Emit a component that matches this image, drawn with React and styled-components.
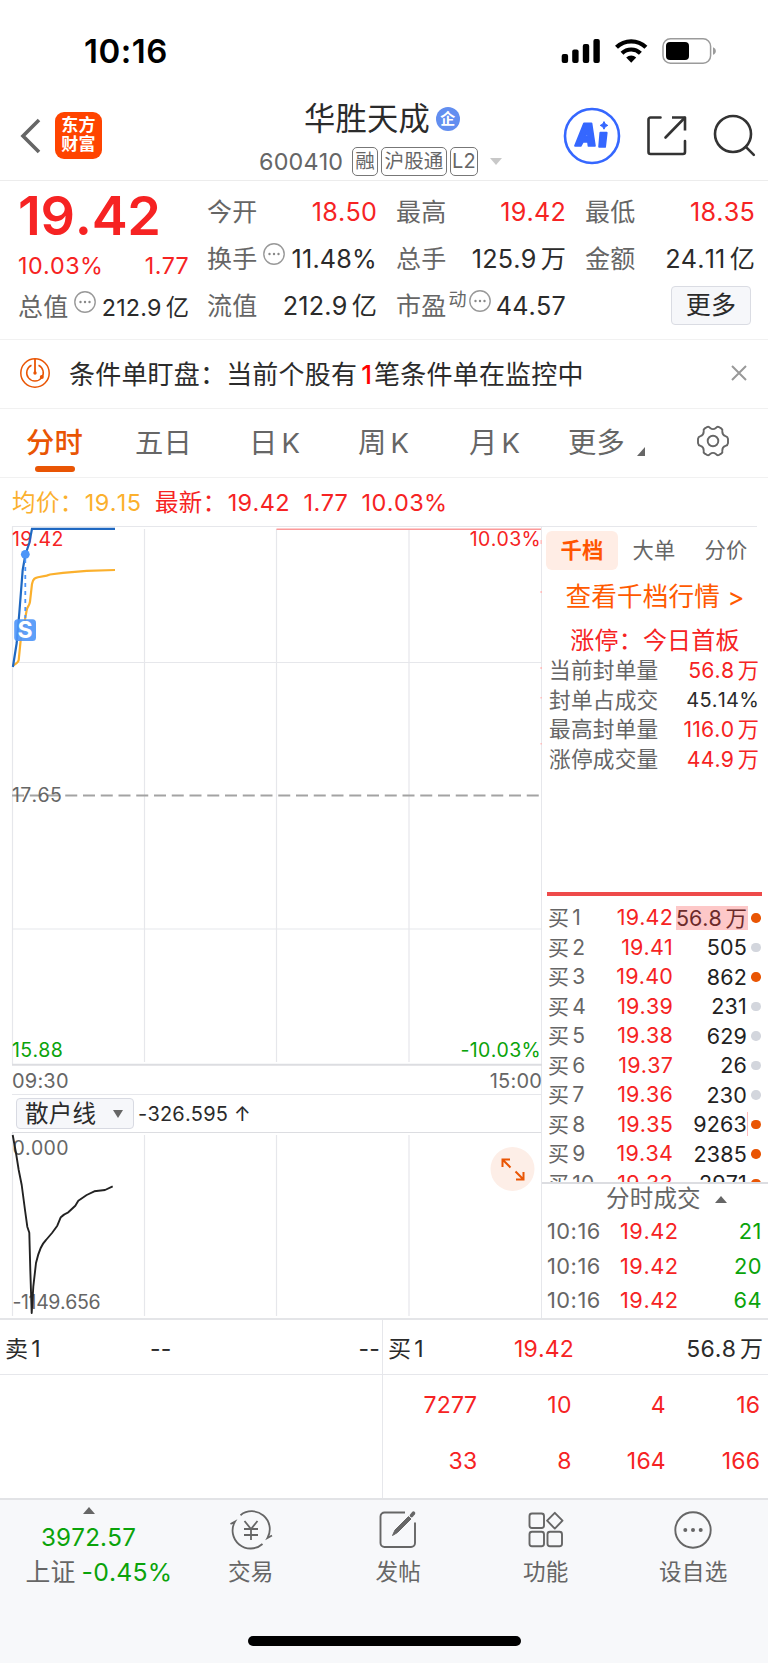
import React from 'react'

import styled, { createGlobalStyle } from 'styled-components';

const RED = '#f62323'
const GREEN = '#0aa30a'
const ORANGE = '#e95504'
const GRAY = '#666'
const DARK = '#2b2b2b'
const LINE = '#e6e7eb'

const quotes = [
  [
    { label: '今开', value: '18.50', color: RED },
    { label: '最高', value: '19.42', color: RED },
    { label: '最低', value: '18.35', color: RED },
  ],
  [
    { label: '换手', value: '11.48%', tip: true },
    { label: '总手', value: '125.9', unit: '万' },
    { label: '金额', value: '24.11', unit: '亿' },
  ],
]

const tabs = [
  { name: '分时', active: true },
  { name: '五日' },
  { name: '日', k: true },
  { name: '周', k: true },
  { name: '月', k: true },
  { name: '更多', more: true },
]

const limits = [
  { label: '当前封单量', value: '56.8', unit: '万', color: RED },
  { label: '封单占成交', value: '45.14%', color: DARK, small: true },
  { label: '最高封单量', value: '116.0', unit: '万', color: RED },
  { label: '涨停成交量', value: '44.9', unit: '万', color: RED },
]

const bids = [
  { price: '19.42', vol: '56.8', unit: '万', hot: true, full: true },
  { price: '19.41', vol: '505' },
  { price: '19.40', vol: '862', hot: true },
  { price: '19.39', vol: '231' },
  { price: '19.38', vol: '629' },
  { price: '19.37', vol: '26' },
  { price: '19.36', vol: '230' },
  { price: '19.35', vol: '9263', hot: true, edge: true },
  { price: '19.34', vol: '2385', hot: true },
  { price: '19.33', vol: '2971', hot: true },
]

const trades = ['21', '20', '64']

const queue = [
  ['7277', '10', '4', '16'],
  ['33', '8', '164', '166'],
]

const Tip = () => (
  <TipIcon width="22" height="22" viewBox="0 0 22 22">
    <circle cx="11" cy="11" r="10.2" fill="none" stroke="#999" strokeWidth="1.4" />
    <circle cx="6.5" cy="11" r="1.2" fill="#888" />
    <circle cx="11" cy="11" r="1.2" fill="#888" />
    <circle cx="15.5" cy="11" r="1.2" fill="#888" />
  </TipIcon>
)

const StatusIcons = () => (
  <svg width="158" height="28" viewBox="560 37 158 28">
    <rect x="561.7" y="54" width="6.4" height="9" rx="2" />
    <rect x="572.2" y="49.5" width="6.4" height="13.5" rx="2" />
    <rect x="582.8" y="44" width="6.4" height="19" rx="2" />
    <rect x="593.4" y="39" width="6.4" height="24" rx="2" />
    <g fill="none" stroke="#000" strokeWidth="4.2">
      <path d="M616.5 47.3a21 21 0 0 1 29.4 0" />
      <path d="M622 53.2a13.3 13.3 0 0 1 18.4 0" />
    </g>
    <path d="M626.2 57.6a7.2 7.2 0 0 1 10 0l-5 5.2z" />
    <rect x="663" y="38.8" width="47.6" height="24.4" rx="7.5" fill="none" stroke="#9b9b9b" strokeWidth="1.5" />
    <rect x="666" y="42" width="23" height="18" rx="4" />
    <path d="M713 47.2c3.8 1.4 3.8 6.2 0 7.6z" fill="#9b9b9b" />
  </svg>
)

const AiIcon = () => (
  <svg width="58" height="58" viewBox="0 0 58 58">
    <circle cx="29" cy="29" r="27" fill="#fff" stroke="#3567ff" strokeWidth="2.6" />
    <g fill="#3567ff" stroke="#3567ff" strokeWidth="2" strokeLinejoin="round">
      <path fillRule="evenodd" d="M21 16.5h7.400l3.400 22.300h-6.200l-.5-4h-5.200l-2.200 4h-5.600zM24.600 24l-2.500 5.700h3.100z" />
      <path d="M37.4 25.800h6.200l-1.600 14h-5.800z" />
    </g>
    <path d="M41 14.6l1.300 2.500 2.500 1.300-2.500 1.300-1.300 2.500-1.300-2.500-2.500-1.300 2.500-1.300z" fill="#3567ff" stroke="#3567ff" />
  </svg>
)

const ShareIcon = () => (
  <svg width="42" height="42" viewBox="0 0 42 42" fill="none" stroke="#333" strokeWidth="2.6" strokeLinecap="round" strokeLinejoin="round">
    <path d="M14.5 2.5H4.5a2 2 0 0 0-2 2V37a2 2 0 0 0 2 2H37a2 2 0 0 0 2-2V26" />
    <path d="M26 2.5h13v13" strokeLinecap="butt" />
    <path d="M38.5 3L19.5 22.5" />
  </svg>
)

const SearchIcon = () => (
  <svg width="44" height="44" viewBox="0 0 44 44" fill="none" stroke="#333" strokeWidth="2.6" strokeLinecap="round">
    <circle cx="20" cy="20" r="18" />
    <path d="M32.8 32.8l8 8" />
  </svg>
)

const GearIcon = () => (
  <svg width="34" height="34" viewBox="0 0 34 34" fill="none" stroke={GRAY} strokeWidth="1.9" strokeLinejoin="round">
    <path d="M10.8 3.2q2-1 3.3.8q2.9 2.2 5.8 0q1.3-1.8 3.3-.8l2 1.2q1.7 1.2 1.1 3.2q0 3.5 3.2 4.6q2.3.6 2.5 2.7v4.2q-.2 2.1-2.5 2.7q-3.2 1.1-3.2 4.6q.6 2-1.1 3.2l-2 1.2q-2 1-3.3-.8q-2.9-2.2-5.8 0q-1.3 1.8-3.3.8l-2-1.2q-1.7-1.2-1.1-3.2q0-3.5-3.2-4.6q-2.3-.6-2.5-2.7v-4.2q.2-2.1 2.5-2.7q3.2-1.1 3.2-4.6q-.6-2 1.1-3.2z" />
    <circle cx="17" cy="17" r="5.3" />
  </svg>
)

const RadarIcon = () => (
  <svg width="32" height="32" viewBox="0 0 32 32" fill="none" stroke={ORANGE} strokeWidth="1.5">
    <circle cx="16" cy="16" r="14.2" />
    <path d="M12.5 8.2a8.3 8.3 0 1 0 7 0" />
    <path d="M16 2v14" strokeWidth="1.8" />
    <circle cx="16" cy="16" r="1.7" fill={ORANGE} stroke="none" />
    <circle cx="22.8" cy="20" r="2" fill={ORANGE} stroke="none" />
  </svg>
)

const PriceChart = () => (
  <ChartSvg width="542" height="540" viewBox="0 526 542 540">
    <g stroke={LINE} strokeWidth="1.2" fill="none">
      <path d="M12.5 1064V526.5H542" />
      <path d="M144.5 529V1062M276.5 529V1062M409 529V1062" />
      <path d="M12.5 662.5H541M12.5 929H541" />
    </g>
    <path d="M12 1064.8H542" stroke="#dcdde1" strokeWidth="2" />
    <path d="M276.5 529.2H541" stroke="#fb9a9a" strokeWidth="1.4" />
    <path d="M12 795.5H540" stroke="#a3a3a3" strokeWidth="2" strokeDasharray="12 5.75" />
    <path d="M541.2 540v4M541.2 591v2M541.2 667v2M541.2 697v1.5M541.2 743v1.5" stroke="#fbb" strokeWidth="1.5" />
    <ChartText x="12" y="801.5" fill={GRAY}>17.65</ChartText>
    <ChartText x="12" y="545.7" fill={RED}>19.42</ChartText>
    <ChartText x="541" y="545.7" fill={RED} textAnchor="end">10.03%</ChartText>
    <ChartText x="12" y="1057.3" fill={GREEN}>15.88</ChartText>
    <ChartText x="541" y="1057.3" fill={GREEN} textAnchor="end">-10.03%</ChartText>
    <path d="M13 665.5C16 664 18 663 18.7 660L20.7 640L24 625L26.7 610C27.5 606 29.5 606 30 601.7L32 584C33 578.5 35 578 38 577.2L46.7 575.6L50 574.5L63 572.8L86.7 570.8L115 570" stroke="#fbb02d" strokeWidth="2.2" fill="none" />
    <path d="M12.9 667L16.7 643L19.3 613L22.7 570L25.3 555L29.3 543L32 528.8H115" stroke="#1f68c1" strokeWidth="2.2" fill="none" />
    <path d="M25.3 559V618" stroke="#4d95f8" strokeWidth="1.8" strokeDasharray="4 4" />
    <circle cx="25.3" cy="554.3" r="4.4" fill="#4d95f8" />
    <rect x="14.2" y="619.2" width="21.8" height="21.8" rx="3.5" fill="#4d95f8" opacity="0.9" />
    <BadgeText x="25.1" y="637.8" textAnchor="middle">S</BadgeText>
  </ChartSvg>
)

const RetailChart = () => (
  <ChartSvg width="542" height="185" viewBox="0 1133 542 185">
    <g stroke={LINE} strokeWidth="1.2">
      <path d="M12.5 1133V1316M144.5 1135V1316M276.5 1135V1316M409 1135V1316" />
    </g>
    <ChartText x="12.5" y="1155" fill={GRAY}>0.000</ChartText>
    <ChartText x="12.5" y="1308.7" fill={GRAY} $tight>-1149.656</ChartText>
    <path
      d="M12.7 1135L16 1153L18.7 1170L21.7 1185L25 1210L27.3 1226.7L29.3 1232.7L30.3 1270L31.7 1313L33.3 1286.7L36 1263Q38 1254 40.7 1248Q43 1243 46 1240L52 1233L57.3 1225.7L60.7 1217.3Q63 1214.5 68.3 1212.3L75.3 1205.7L78.3 1200.7L86.7 1195L94.3 1191.3L105 1190L112.7 1186.3"
      stroke="#222" strokeWidth="1.9" fill="none" strokeLinejoin="round"
    />
    <circle cx="512.5" cy="1169" r="22" fill="#fdeee7" />
    <g stroke={ORANGE} strokeWidth="2" fill="none">
      <path d="M502.5 1167V1159.500H510M502.5 1159.500L510.5 1167.5" />
      <path d="M523.5 1172V1179.500H516M523.5 1179.500L515.5 1171.5" />
    </g>
  </ChartSvg>
)

const TradeIcon = () => (
  <svg width="44" height="40" viewBox="-22 -20 44 40" fill="none" stroke={GRAY} strokeWidth="1.8">
    <path d="M-10.5 -14.8A18 18 0 0 1 16.5 8l4.5-2.5" />
    <path d="M11.5 14A18 18 0 0 1 -16 -8.500l-4.5 2.5" />
    <path d="M-6.5 -9L0 -1L6.5 -9M0 -1V10M-7 -1H7M-7 5H7" />
  </svg>
)

const PostIcon = () => (
  <svg width="40" height="40" viewBox="0 0 40 40" fill="none" stroke={GRAY} strokeWidth="1.9">
    <path d="M27 2.5H6.5a4 4 0 0 0-4 4V33a4 4 0 0 0 4 4H33a4 4 0 0 0 4-4V12.5" />
    <path d="M14.5 25.5L17 20L30.5 6.5L33 9L19.5 22.5Z" fill={GRAY} strokeWidth="1" />
    <path d="M33.5 5.7L35.5 3.2" strokeWidth="3.6" strokeLinecap="round" />
  </svg>
)

const GridIcon = () => (
  <svg width="38" height="38" viewBox="0 0 38 38" fill="none" stroke={GRAY} strokeWidth="1.9" strokeLinejoin="round">
    <rect x="2.5" y="2.5" width="14.5" height="14.5" rx="2.5" />
    <rect x="2.5" y="20.8" width="14.5" height="14.5" rx="2.5" />
    <rect x="20.5" y="20.8" width="14.5" height="14.5" rx="2.5" />
    <path d="M27.8 1.8L35.5 9.7L27.8 17.6L20.1 9.7Z" />
  </svg>
)

const DotsIcon = () => (
  <svg width="40" height="40" viewBox="0 0 40 40">
    <circle cx="20" cy="20" r="17.7" fill="none" stroke={GRAY} strokeWidth="1.9" />
    <circle cx="12.3" cy="20" r="2" fill={GRAY} />
    <circle cx="20" cy="20" r="2" fill={GRAY} />
    <circle cx="27.7" cy="20" r="2" fill={GRAY} />
  </svg>
)

const nav = [
  { name: '交易', icon: <TradeIcon /> },
  { name: '发帖', icon: <PostIcon /> },
  { name: '功能', icon: <GridIcon /> },
  { name: '设自选', icon: <DotsIcon /> },
]

export default function App() {
  return (
    <Page>
      <GlobalStyle />

      <StatusBar>
        <Clock>10:16</Clock>
        <StatusIcons />
      </StatusBar>

      <Header>
        <HeaderLeft>
          <svg width="22" height="36" viewBox="0 0 22 36" fill="none" stroke="#666" strokeWidth="3.6">
            <path d="M20 2L4 18L20 34" />
          </svg>
          <Logo><span>东方</span><span>财富</span></Logo>
        </HeaderLeft>
        <Title>
          <Name>华胜天成<NameBadge>企</NameBadge></Name>
          <Code>
            <CodeNumber>600410</CodeNumber>
            <Tag $w={26}>融</Tag>
            <Tag $w={66}>沪股通</Tag>
            <Tag $w={28} $latin>L2</Tag>
            <Caret $w={6.5} $h={7.5} $c="#c8c8c8" $down />
          </Code>
        </Title>
        <HeaderRight>
          <AiIcon />
          <ShareIcon />
          <SearchIcon />
        </HeaderRight>
      </Header>

      <Quote>
        <PriceCol>
          <BigPrice>19.42</BigPrice>
          <Change><span>10.03%</span><span>1.77</span></Change>
          <QuoteCell $small>
            <Label>总值</Label><Tip />
            <Value>212.9<Unit>亿</Unit></Value>
          </QuoteCell>
        </PriceCol>
        <QuoteGrid>
          {quotes.flat().map(q => (
            <QuoteCell key={q.label}>
              <Label>{q.label}</Label>
              {q.tip && <Tip />}
              <Value $color={q.color}>{q.value}{q.unit && <Unit>{q.unit}</Unit>}</Value>
            </QuoteCell>
          ))}
          <QuoteCell><Label>流值</Label><Value>212.9<Unit>亿</Unit></Value></QuoteCell>
          <QuoteCell $close><Label>市盈<Sup>动</Sup></Label><Tip /><Value>44.57</Value></QuoteCell>
          <QuoteCell><MoreButton>更多</MoreButton></QuoteCell>
        </QuoteGrid>
      </Quote>

      <Alert>
        <RadarIcon />
        <AlertText>条件单盯盘：当前个股有<b>1</b>笔条件单在监控中</AlertText>
        <svg width="18" height="18" viewBox="0 0 18 18" stroke="#999" strokeWidth="2">
          <path d="M2 2L16 16M16 2L2 16" />
        </svg>
      </Alert>

      <Tabs>
        {tabs.map(t => (
          <Tab key={t.name} $active={t.active}>
            {t.name}{t.k && <K>K</K>}
            {t.more && (
              <svg width="8" height="9" viewBox="0 0 8 9"><path d="M8 0V9H0Z" fill={GRAY} /></svg>
            )}
          </Tab>
        ))}
        <GearIcon />
      </Tabs>

      <Summary>
        <Avg>均价：<i>19.15</i></Avg>
        <span>最新：<i>19.42</i></span>
        <span>1.77</span>
        <span>10.03%</span>
      </Summary>

      <Main>
        <Charts>
          <PriceChart />
          <TimeAxis><span>09:30</span><span>15:00</span></TimeAxis>
          <Indicator>
            <IndicatorButton>散户线<Caret $w={5} $h={8.5} $c={GRAY} $down /></IndicatorButton>
            <span>-326.595 ↑</span>
          </Indicator>
          <RetailChart />
        </Charts>

        <Side>
          <SideTabs>
            <SideTab $active>千档</SideTab>
            <SideTab>大单</SideTab>
            <SideTab>分价</SideTab>
          </SideTabs>
          <DepthLink>查看千档行情 <span>&gt;</span></DepthLink>
          <LimitTitle>涨停：今日首板</LimitTitle>
          <Limits>
            {limits.map(l => (
              <LimitRow key={l.label}>
                <span>{l.label}</span>
                <LimitValue $color={l.color} $small={l.small}>{l.value}{l.unit && <Unit>{l.unit}</Unit>}</LimitValue>
              </LimitRow>
            ))}
          </Limits>
          <RedBar />
          <Bids>
            {bids.map((b, i) => (
              <BidRow key={b.price}>
                <BidName>买<em>{i + 1}</em></BidName>
                <BidPrice>{b.price}</BidPrice>
                <BidVol $full={b.full} $edge={b.edge}>{b.vol}{b.unit && <Unit>{b.unit}</Unit>}</BidVol>
                <Dot $hot={b.hot} />
              </BidRow>
            ))}
          </Bids>
          <TradesTitle>分时成交<Caret $w={6} $h={7} $c={GRAY} /></TradesTitle>
          {trades.map(t => (
            <TradeRow key={t}>
              <span>10:16</span>
              <TradePrice>19.42</TradePrice>
              <TradeVol>{t}</TradeVol>
            </TradeRow>
          ))}
        </Side>
      </Main>

      <Level>
        <LevelHalf>
          <LevelHead>
            <LevelName>卖<em>1</em></LevelName>
            <LevelMid $left={145}>--</LevelMid>
            <LevelEnd>--</LevelEnd>
          </LevelHead>
        </LevelHalf>
        <LevelHalf $right>
          <LevelHead>
            <LevelName>买<em>1</em></LevelName>
            <LevelMid $left={126} $color={RED}>19.42</LevelMid>
            <LevelEnd>56.8<Unit>万</Unit></LevelEnd>
          </LevelHead>
          <Queue>
            {queue.flat().map((n, i) => <span key={i}>{n}</span>)}
          </Queue>
        </LevelHalf>
      </Level>

      <BottomBar>
        <IndexBox>
          <Caret $w={6.5} $h={7} $c={GRAY} />
          <IndexValue>3972.57</IndexValue>
          <IndexName>上证<IndexChange>-0.45%</IndexChange></IndexName>
        </IndexBox>
        {nav.map(n => (
          <NavItem key={n.name}>
            <NavIcon>{n.icon}</NavIcon>
            {n.name}
          </NavItem>
        ))}
      </BottomBar>
      <HomeArea><HomeBar /></HomeArea>
    </Page>
  );
}

const GlobalStyle = createGlobalStyle`
  * { box-sizing: border-box; }
  body {
    margin: 0;
    background: #fff;
    font-family: Inter, "Noto Sans CJK SC", sans-serif;
    font-weight: 390;
    font-kerning: none;
    letter-spacing: 0.012em;
  }
  svg { display: block; flex: none; }
  em, i { font-style: normal; }
`

const Page = styled.div`
  width: 768px;
  height: 1663px;
  overflow: hidden;
  display: flex;
  flex-direction: column;
  color: ${DARK};
  white-space: nowrap;
`

const StatusBar = styled.div`
  height: 95px;
  flex: none;
  display: flex;
  align-items: center;
  justify-content: space-between;
  padding: 7px 50px 0 84px;
`
const Clock = styled.div`
  font-size: 33px;
  font-weight: 600;
  letter-spacing: 0.5px;
  color: #000;
`

const Header = styled.div`
  height: 86px;
  flex: none;
  display: flex;
  border-bottom: 1px solid #ececec;
`
const HeaderLeft = styled.div`
  width: 259px;
  display: flex;
  align-items: center;
  padding: 0 0 4px 19px;
`
const Logo = styled.div`
  width: 47px;
  height: 47px;
  margin-left: 14px;
  border-radius: 9px;
  background: #ff4400;
  color: #fff;
  font-size: 17px;
  font-weight: 700;
  line-height: 19px;
  text-align: center;
  padding-top: 4px;
  span { display: block; }
`
const Title = styled.div`
  width: 304px;
`
const Name = styled.div`
  display: flex;
  align-items: center;
  height: 42px;
  margin: 3px 0 0 45px;
  font-size: 31.3px;
  line-height: 42px;
`
const NameBadge = styled.span`
  width: 24px;
  height: 24px;
  margin-left: 6px;
  border-radius: 50%;
  background: #628ef0;
  color: #fff;
  font-size: 15px;
  font-weight: 700;
  line-height: 24px;
  text-align: center;
`
const Code = styled.div`
  display: flex;
  align-items: center;
  margin-top: 6px;
  height: 30px;
`
const CodeNumber = styled.span`
  width: 90px;
  font-size: 23.3px;
  color: ${GRAY};
`
const Tag = styled.span`
  width: ${p => p.$w}px;
  height: 29px;
  margin: 0 0 0 3px;
  border: 1.3px solid #777;
  border-radius: 5px;
  font-size: ${p => (p.$latin ? 20 : 19.5)}px;
  line-height: 27px;
  text-align: center;
  color: ${GRAY};
`
const Caret = styled.span`
  width: 0;
  height: 0;
  flex: none;
  border: ${p => p.$w}px solid transparent;
  border-${p => (p.$down ? 'top' : 'bottom')}: ${p => p.$h}px solid ${p => p.$c};
  border-${p => (p.$down ? 'bottom' : 'top')}: 0;
  ${Code} & { margin-left: 12px; }
`
const HeaderRight = styled.div`
  display: flex;
  align-items: center;
  padding-bottom: 4px;
  gap: 25px;
`

const Quote = styled.div`
  height: 159px;
  flex: none;
  display: flex;
  padding-left: 18px;
  border-bottom: 1px solid #f1f1f1;
`
const PriceCol = styled.div`
  width: 171px;
  margin-right: 18px;
`
const BigPrice = styled.div`
  margin-top: 5px;
  height: 59px;
  font-size: 54px;
  font-weight: 600;
  line-height: 60px;
  letter-spacing: -0.3px;
  color: ${RED};
`
const Change = styled.div`
  display: flex;
  justify-content: space-between;
  height: 41px;
  line-height: 42px;
  font-size: 23.3px;
  letter-spacing: 0.4px;
  color: ${RED};
`
const QuoteGrid = styled.div`
  display: grid;
  grid-template-columns: repeat(3, 170px);
  grid-auto-rows: 47px;
  column-gap: 19px;
  padding-top: 8px;
`
const QuoteCell = styled.div`
  display: flex;
  align-items: center;
  height: 47px;
  font-size: ${p => (p.$small ? 23.3 : 25.2)}px;
  line-height: 47px;
  ${p => p.$small && 'margin-top: -2px;'}
  svg { margin-left: ${p => (p.$close ? 2 : 6)}px; }
`
const Label = styled.span`
  font-size: 25px;
  color: ${GRAY};
`
const Value = styled.span`
  margin-left: auto;
  color: ${p => p.$color || DARK};
`
const Unit = styled.span`
  margin-left: 0.17em;
  letter-spacing: 0;
`
const Sup = styled.span`
  font-size: 18px;
  vertical-align: 9px;
  line-height: 1;
  margin-left: 2px;
`
const TipIcon = styled.svg`
  margin-top: -11px;
`
const MoreButton = styled.div`
  width: 80px;
  height: 39px;
  margin: -2px 4px 0 auto;
  border: 1px solid #dadce3;
  border-radius: 4px;
  background: #f6f7fa;
  font-size: 25px;
  line-height: 37px;
  text-align: center;
`

const Alert = styled.div`
  height: 69px;
  flex: none;
  display: flex;
  align-items: center;
  padding: 0 20px 2px 19px;
  border-bottom: 1px solid #f1f1f1;
`
const AlertText = styled.div`
  flex: 1;
  margin: -2px 0 0 18px;
  font-size: 26px;
  b {
    font-weight: 500;
    color: #f00;
    margin: 0 2px 0 4px;
  }
`

const Tabs = styled.div`
  height: 69px;
  flex: none;
  display: grid;
  grid-template-columns: 109px 114px 109px 111px 99px 128px 1fr;
  align-items: center;
  padding: 0 0 4px 26px;
  border-bottom: 1px solid #f1f1f1;
`
const Tab = styled.div`
  position: relative;
  display: flex;
  align-items: center;
  font-size: 28.3px;
  line-height: 60px;
  height: 60px;
  padding-top: 3px;
  color: ${p => (p.$active ? ORANGE : GRAY)};
  font-weight: ${p => (p.$active ? 500 : 390)};
  svg { margin: 18px 0 0 12px; }
  &::after {
    content: '';
    display: ${p => (p.$active ? 'block' : 'none')};
    position: absolute;
    left: 9px;
    bottom: -1px;
    width: 40px;
    height: 6px;
    border-radius: 3px;
    background: ${ORANGE};
  }
`
const K = styled.span`
  margin-left: 4px;
  font-size: 27.5px;
`

const Summary = styled.div`
  height: 48px;
  flex: none;
  display: flex;
  gap: 13.5px;
  padding-left: 12px;
  font-size: 23.5px;
  line-height: 49px;
  letter-spacing: 0.4px;
  color: ${RED};
  i { margin-left: 1px; }
`
const Avg = styled.span`
  color: #fbb02d;
`

const Main = styled.div`
  height: 794px;
  flex: none;
  display: flex;
  border-bottom: 2px solid #e4e5e8;
`
const Charts = styled.div`
  width: 542px;
  border-right: 1px solid ${LINE};
`
const ChartSvg = styled.svg`
  margin-right: -1px;
`
const ChartText = styled.text`
  font-size: 19.5px;
  letter-spacing: ${p => (p.$tight ? -0.4 : 0.3)}px;
`
const BadgeText = styled.text`
  font-size: 23px;
  font-weight: 700;
  fill: #fff;
`
const TimeAxis = styled.div`
  display: flex;
  justify-content: space-between;
  height: 29px;
  margin: 0 -1px 0 12px;
  border-bottom: 1px solid ${LINE};
  font-size: 20px;
  line-height: 30px;
  color: ${GRAY};
`
const Indicator = styled.div`
  display: flex;
  align-items: center;
  height: 38px;
  margin-left: 12px;
  padding-left: 4px;
  border-bottom: 1px solid #dcdde1;
  font-size: 20px;
`
const IndicatorButton = styled.div`
  width: 118px;
  height: 31px;
  margin-right: 4px;
  display: flex;
  align-items: center;
  justify-content: space-between;
  padding: 0 10px 0 8px;
  border: 1px solid #d8dae2;
  border-radius: 4px;
  background: #f6f7fa;
  font-size: 23.5px;
  line-height: 29px;
`

const Side = styled.div`
  width: 226px;
  display: flex;
  flex-direction: column;
  color: ${GRAY};
`
const SideTabs = styled.div`
  display: flex;
  height: 46px;
  width: 215px;
  border-top: 1px solid ${LINE};
  padding: 4px 0 0 4px;
  flex: none;
`
const SideTab = styled.div`
  width: 72px;
  height: 39px;
  flex: none;
  border-radius: 6px;
  font-size: 21.3px;
  line-height: 38px;
  text-align: center;
  color: ${p => (p.$active ? '#ff5500' : GRAY)};
  font-weight: ${p => (p.$active ? 700 : 390)};
  background: ${p => (p.$active ? '#ffede5' : 'none')};
`
const DepthLink = styled.div`
  height: 50px;
  flex: none;
  line-height: 49px;
  font-size: 25.6px;
  text-align: center;
  color: #ff5a00;
`
const LimitTitle = styled.div`
  height: 34px;
  flex: none;
  line-height: 37px;
  font-size: 24px;
  text-align: center;
  color: ${RED};
`
const Limits = styled.div`
  height: 236px;
  flex: none;
  padding: 0 9px 0 7px;
`
const LimitRow = styled.div`
  display: flex;
  justify-content: space-between;
  height: 29.5px;
  line-height: 29.5px;
  font-size: 21.7px;
`
const LimitValue = styled.span`
  font-size: ${p => (p.$small ? 20 : 21.2)}px;
  color: ${p => p.$color};
`
const RedBar = styled.div`
  height: 4px;
  flex: none;
  margin: 0 6px 0 5px;
  background: #ee4a4a;
`
const Bids = styled.div`
  height: 288px;
  flex: none;
  overflow: hidden;
  padding-top: 7px;
  border-bottom: 2px solid #dcdde1;
`
const BidRow = styled.div`
  display: grid;
  grid-template-columns: 54px 71px 75px 10px;
  align-items: center;
  height: 29.5px;
  padding-left: 6px;
  font-size: 21.5px;
  line-height: 29px;
`
const BidName = styled.span`
  font-size: 21px;
  em { margin-left: 3px; }
`
const BidPrice = styled.span`
  color: ${RED};
  text-align: right;
`
const BidVol = styled.span`
  justify-self: end;
  height: 24px;
  line-height: 24px;
  color: ${p => (p.$full ? '#6b2b2b' : '#222')};
  background: ${p => (p.$full ? '#fdc8c8' : 'none')};
  border-right: 1px solid ${p => (p.$edge ? '#fbb' : 'transparent')};
  ${p => p.$full && 'letter-spacing: 0;'}
`
const Dot = styled.span`
  width: 9.5px;
  height: 9.5px;
  margin-left: 3px;
  border-radius: 50%;
  background: ${p => (p.$hot ? ORANGE : '#d3d6dd')};
`
const TradesTitle = styled.div`
  display: flex;
  align-items: center;
  gap: 14px;
  padding-left: 64px;
  height: 30px;
  flex: none;
  font-size: 23.5px;
  line-height: 30px;
`
const TradeRow = styled.div`
  display: grid;
  grid-template-columns: 73px 1fr auto;
  padding: 0 6px 0 5px;
  height: 34.6px;
  flex: none;
  line-height: 34.6px;
  font-size: 21.8px;
  letter-spacing: 0.5px;
`
const TradePrice = styled.span`
  color: ${RED};
`
const TradeVol = styled.span`
  color: ${GREEN};
`

const Level = styled.div`
  height: 180px;
  flex: none;
  display: flex;
  border-bottom: 2px solid #e2e3e6;
`
const LevelHalf = styled.div`
  width: ${p => (p.$right ? 386 : 382)}px;
  ${p => p.$right && `border-left: 1px solid ${LINE};`}
`
const LevelHead = styled.div`
  display: flex;
  height: 55px;
  padding: 0 5px;
  border-bottom: 1px solid ${LINE};
  font-size: 23px;
  line-height: 58px;
  ${LevelHalf}:first-child & { padding-right: 2px; }
`
const LevelName = styled.span`
  width: 0;
  em { margin-left: 3px; }
`
const LevelMid = styled.span`
  margin-left: ${p => p.$left}px;
  color: ${p => p.$color || DARK};
`
const LevelEnd = styled.span`
  margin-left: auto;
`
const Queue = styled.div`
  display: grid;
  grid-template-columns: repeat(4, 94.3px);
  grid-auto-rows: 56px;
  text-align: right;
  font-size: 23px;
  line-height: 61px;
  color: ${RED};
`

const BottomBar = styled.div`
  height: 100px;
  flex: none;
  display: flex;
  background: #f7f8fa;
  color: ${GRAY};
`
const IndexBox = styled.div`
  width: 177px;
  display: flex;
  flex-direction: column;
  align-items: center;
  padding-top: 7px;
`
const IndexValue = styled.div`
  height: 35px;
  margin-top: 6px;
  font-size: 24.2px;
  line-height: 35px;
  color: ${GREEN};
`
const IndexName = styled.div`
  height: 34px;
  padding-left: 21px;
  font-size: 24.8px;
  line-height: 34px;
`
const IndexChange = styled.span`
  margin-left: 6px;
  color: ${GREEN};
`
const NavItem = styled.div`
  width: 147.5px;
  text-align: center;
  font-size: 22.6px;
  line-height: 34px;
`
const NavIcon = styled.div`
  height: 55px;
  display: flex;
  align-items: center;
  justify-content: center;
  padding-top: 4px;
`
const HomeArea = styled.div`
  flex: 1;
  background: #f7f8fa;
  display: flex;
  justify-content: center;
  padding-top: 36px;
`
const HomeBar = styled.div`
  width: 273px;
  height: 10px;
  border-radius: 5px;
  background: #000;
`
